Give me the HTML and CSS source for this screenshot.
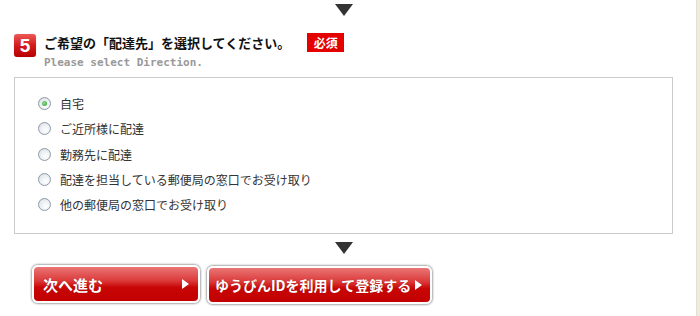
FILE: index.html
```html
<!DOCTYPE html>
<html lang="ja">
<head>
<meta charset="utf-8">
<link rel="stylesheet" href="styles.css">
</head>
<body>
<div class="page">
  <main class="main">
    <div class="arrow arrow-top"></div>
    <div class="header">
      <div class="step">5</div>
      <div class="heading">
        <div class="title-row">
          <h2 class="title">ご希望の「配達先」を選択してください。</h2>
          <span class="required">必須</span>
        </div>
        <p class="subtitle">Please select Direction.</p>
      </div>
    </div>
    <div class="box">
      <label class="option"><input type="radio" name="dest" class="radio" checked><span>自宅</span></label>
      <label class="option"><input type="radio" name="dest" class="radio"><span>ご近所様に配達</span></label>
      <label class="option"><input type="radio" name="dest" class="radio"><span>勤務先に配達</span></label>
      <label class="option"><input type="radio" name="dest" class="radio"><span>配達を担当している郵便局の窓口でお受け取り</span></label>
      <label class="option"><input type="radio" name="dest" class="radio"><span>他の郵便局の窓口でお受け取り</span></label>
    </div>
    <div class="arrow arrow-bottom"></div>
    <div class="buttons">
      <button class="btn btn-next"><span>次へ進む</span><i class="tri"></i></button>
      <button class="btn btn-id"><span>ゆうびんIDを利用して登録する</span><i class="tri"></i></button>
    </div>
  </main>
  <div class="side"></div>
</div>
</body>
</html>
```
FILE: styles.css
```css
html, body {
  margin: 0;
  padding: 0;
  background: #fff;
}
body {
  font-family: "Noto Sans CJK JP", "Liberation Sans", sans-serif;
  color: #333;
}
.page {
  display: flex;
  width: 700px;
  height: 316px;
  overflow: hidden;
}
.main {
  width: 659px;
  margin-left: 14px;
  display: flex;
  flex-direction: column;
}
.side {
  margin-left: auto;
  width: 3px;
  background: #efebdf;
  border-left: 1px solid #e4dfcf;
}
.arrow {
  align-self: center;
  width: 0;
  height: 0;
  border-left: 9px solid transparent;
  border-right: 9px solid transparent;
  border-top: 12px solid #333;
}
.arrow-top {
  margin-top: 4px;
}
.header {
  display: flex;
  align-items: flex-start;
  margin-top: 17px;
}
.step {
  width: 22px;
  height: 23px;
  border-radius: 3px;
  background: linear-gradient(#ec5a55 0%, #d21c1c 50%, #b80000 100%);
  color: #fff;
  font-family: "Liberation Sans", Arial, sans-serif;
  font-weight: bold;
  font-size: 19px;
  line-height: 24px;
  text-align: center;
  margin-top: 1px;
  box-shadow: 0 0 1px rgba(0,0,0,.3);
}
.heading {
  margin-left: 8px;
}
.title-row {
  display: flex;
  align-items: center;
  height: 19px;
}
.title {
  margin: 0;
  font-size: 13px;
  font-weight: bold;
  color: #111;
  line-height: 19px;
}
.required {
  margin-left: 17px;
  width: 37px;
  height: 19px;
  background: #e50000;
  color: #fff;
  font-size: 12px;
  font-weight: bold;
  line-height: 19px;
  text-align: center;
}
.subtitle {
  margin: 4px 0 0;
  font-family: "DejaVu Sans Mono", "Liberation Mono", monospace;
  font-size: 11px;
  font-weight: bold;
  color: #999;
  line-height: 13px;
}
.box {
  margin-top: 8px;
  border: 1px solid #ccc;
  padding: 13px 0 16px 23px;
  display: flex;
  flex-direction: column;
}
.option {
  display: flex;
  align-items: center;
  height: 25.3px;
  font-size: 12px;
  color: #333;
}
.radio {
  appearance: none;
  -webkit-appearance: none;
  margin: 0 9px 0 0;
  width: 13px;
  height: 13px;
  border-radius: 50%;
  border: 1px solid #8e9aa8;
  background: radial-gradient(circle at 60% 65%, #ffffff 0%, #e8ecef 60%, #cdd3da 100%);
  box-sizing: border-box;
  position: relative;
}
.radio:checked::after {
  content: "";
  position: absolute;
  left: 3px;
  top: 3px;
  width: 5px;
  height: 5px;
  border-radius: 50%;
  background: radial-gradient(circle at 40% 40%, #8fe08a, #2a9a2a);
}
.arrow-bottom {
  margin-top: 8px;
}
.buttons {
  display: flex;
  gap: 7px;
  margin-left: 18px;
  margin-top: 11px;
  align-items: flex-start;
}
.btn {
  display: flex;
  align-items: center;
  border: 2px solid #fff;
  border-radius: 6px;
  box-shadow: 0 0 2px 1px rgba(0,0,0,.35);
  background: linear-gradient(#ea7676 0%, #dc3a3a 40%, #c80606 60%, #c20000 100%);
  color: #fff;
  font-family: "Noto Sans CJK JP", sans-serif;
  font-weight: bold;
  padding: 0;
  cursor: pointer;
  text-shadow: 0 0 1px rgba(0,0,0,.3);
}
.btn-next {
  width: 168px;
  height: 38px;
  font-size: 15px;
  padding: 0 9px 0 9px;
}
.btn-id {
  width: 225px;
  height: 38px;
  font-size: 14px;
  padding: 0 0 0 6px;
  margin-top: 1px;
}
.tri {
  width: 0;
  height: 0;
  border-top: 5px solid transparent;
  border-bottom: 5px solid transparent;
  border-left: 7px solid #fff;
}
.btn-next .tri {
  margin-left: auto;
}
.btn-id .tri {
  margin-left: 4px;
}
```
